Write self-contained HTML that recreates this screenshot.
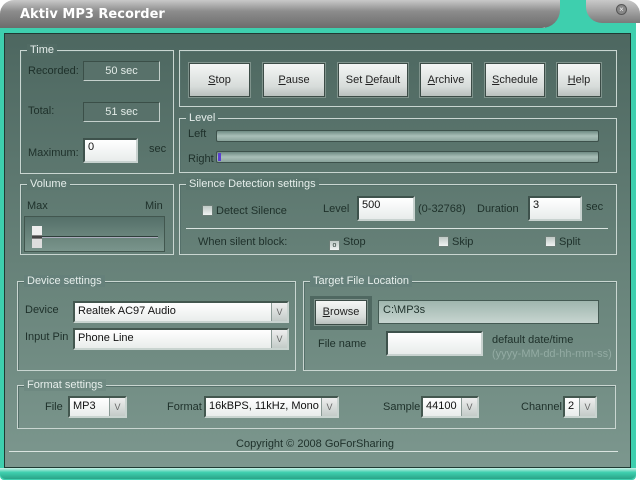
<!DOCTYPE html><html><head><style>
*{margin:0;padding:0;box-sizing:border-box}
body{width:640px;height:480px;overflow:hidden;background:#fff;font-family:"Liberation Sans",sans-serif;font-size:11px;color:#1e302a;position:relative}
.a{position:absolute}
.g{position:absolute;border:1px solid #c9d6d1;box-shadow:inset 1px 1px 0 #55706a}
.gl{position:absolute;top:-7px;left:6px;padding:0 3px;color:#e6eeeb;font-size:11px;line-height:12px}
.btn{position:absolute;height:34px;background:linear-gradient(#f4f6f5,#d7dcda 70%,#b9c0bd);border:1px solid #3c4c47;box-shadow:0 0 0 1px #7f938c;text-align:center;line-height:32px;color:#222;font-size:11px}
.btn u{text-decoration:underline}
.in{position:absolute;background:linear-gradient(#fff,#e8eceb);border:2px solid #3e524c;border-right-color:#c8d2cf;border-bottom-color:#c8d2cf;font-size:11px;padding:1px 3px;color:#111}
.ro{position:absolute;background:#58716a;border:1px solid #c4d0cc;border-top-color:#3b4f48;border-left-color:#3b4f48;text-align:center;color:#e3ece8;line-height:18px}
.bar{position:absolute;height:12px;background:linear-gradient(#6f8b83,#a9bfb8 50%,#8aa39b);border:1px solid #3d514b;border-radius:2px}
.sel{position:absolute;height:22px;background:linear-gradient(#fff,#e9edeb);border:2px solid #43574f;border-right-color:#c9d4d0;border-bottom-color:#c9d4d0;padding:2px 3px;font-size:11px;color:#111;white-space:nowrap;overflow:hidden}
.sel i{position:absolute;right:0;top:0;width:16px;height:18px;background:linear-gradient(#eee,#c3cbc8);border-left:1px solid #8a9a95;font-style:normal;font-size:9px;text-align:center;line-height:18px;color:#666}
.cb{display:inline-block;width:11px;height:11px;background:linear-gradient(#bfc9c5,#f0f3f2);border:1px solid #6c7f78;vertical-align:-2px;margin-right:3px}
</style></head><body>
<!-- title bar -->
<div class="a" style="left:545px;top:0;width:91px;height:40px;background:#3ecfae;border-radius:0 14px 0 0"></div>
<div class="a" style="left:0;top:0;width:560px;height:28px;background:linear-gradient(#c9c9c9,#8d8d8d 40%,#6c6c6c);border-radius:14px 0 18px 0"></div>
<div class="a" style="left:586px;top:0;width:54px;height:23px;background:linear-gradient(#c9c9c9,#7a7a7a);border-radius:0 14px 0 16px"></div>
<div class="a" style="left:20px;top:7px;color:#fff;font-weight:bold;font-size:13px;font-family:'DejaVu Sans',sans-serif;">Aktiv MP3 Recorder</div>
<div class="a" style="left:616px;top:4px;width:11px;height:11px;border-radius:50%;background:#888;border:1px solid #555;color:#eee;font-size:8px;line-height:9px;text-align:center">×</div>
<!-- body -->
<div class="a" style="left:0;top:28px;width:636px;height:452px;background:#3ecfae;border-radius:0 0 4px 4px"></div>
<div class="a" style="left:4px;top:33px;width:627px;height:435px;background:linear-gradient(#4d6760,#6a857c 60%,#7c978e);border:1px solid #1f3a33"></div>
<div class="a" style="left:0;top:468px;width:636px;height:11px;background:linear-gradient(#c8f2e7,#3ecfae 40%,#2aa488);border-radius:0 0 6px 6px"></div>

<!-- Time -->
<div class="g" style="left:20px;top:50px;width:154px;height:124px"><span class="gl" style="background:#516b64">Time</span></div>
<div class="a" style="left:28px;top:65px">Recorded:</div>
<div class="ro" style="left:83px;top:61px;width:77px;height:20px">50 sec</div>
<div class="a" style="left:28px;top:105px">Total:</div>
<div class="ro" style="left:83px;top:102px;width:77px;height:20px">51 sec</div>
<div class="a" style="left:28px;top:147px">Maximum:</div>
<div class="in" style="left:83px;top:138px;width:55px;height:25px">0</div>
<div class="a" style="left:149px;top:143px">sec</div>

<!-- Buttons -->
<div class="g" style="left:179px;top:50px;width:438px;height:57px"></div>
<div class="btn" style="left:189px;top:63px;width:61px"><u>S</u>top</div>
<div class="btn" style="left:263px;top:63px;width:62px"><u>P</u>ause</div>
<div class="btn" style="left:338px;top:63px;width:70px">Set <u>D</u>efault</div>
<div class="btn" style="left:420px;top:63px;width:52px"><u>A</u>rchive</div>
<div class="btn" style="left:485px;top:63px;width:60px"><u>S</u>chedule</div>
<div class="btn" style="left:557px;top:63px;width:44px"><u>H</u>elp</div>

<!-- Level -->
<div class="g" style="left:179px;top:118px;width:438px;height:55px"><span class="gl" style="background:#56716a">Level</span></div>
<div class="a" style="left:188px;top:128px">Left</div>
<div class="bar" style="left:216px;top:130px;width:383px"></div>
<div class="a" style="left:188px;top:153px">Right</div>
<div class="bar" style="left:216px;top:151px;width:383px"><div class="a" style="left:1px;top:1px;width:3px;height:8px;background:#5a3fd0"></div></div>

<!-- Volume -->
<div class="g" style="left:20px;top:184px;width:154px;height:71px"><span class="gl" style="background:#5b766e">Volume</span></div>
<div class="a" style="left:27px;top:200px">Max</div>
<div class="a" style="left:145px;top:200px">Min</div>
<div class="a" style="left:24px;top:216px;width:141px;height:36px;background:linear-gradient(#557069,#7a958c);border:1px solid #42574f"></div>
<div class="a" style="left:40px;top:236px;width:118px;height:2px;background:#2e3f3a;border-bottom:1px solid #aab"></div>
<div class="a" style="left:32px;top:226px;width:10px;height:22px;background:linear-gradient(#eee 40%,#444 45%,#444 55%,#ddd 60%)"></div>

<!-- Silence -->
<div class="g" style="left:179px;top:184px;width:438px;height:71px"><span class="gl" style="background:#5b766e">Silence Detection settings</span></div>
<div class="a" style="left:202px;top:205px"><span class="cb"></span>Detect Silence</div>
<div class="a" style="left:323px;top:203px">Level</div>
<div class="in" style="left:357px;top:196px;width:58px;height:25px">500</div>
<div class="a" style="left:418px;top:203px">(0-32768)</div>
<div class="a" style="left:477px;top:203px">Duration</div>
<div class="in" style="left:528px;top:196px;width:54px;height:25px">3</div>
<div class="a" style="left:586px;top:201px">sec</div>
<div class="a" style="left:186px;top:228px;width:422px;height:1px;background:#dbe5e1"></div>
<div class="a" style="left:198px;top:236px">When silent block:</div>
<div class="a" style="left:329px;top:236px"><span class="cb" style="text-align:center;font-size:7px;line-height:9px">o</span>Stop</div>
<div class="a" style="left:438px;top:236px"><span class="cb"></span>Skip</div>
<div class="a" style="left:545px;top:236px"><span class="cb"></span>Split</div>

<!-- Device -->
<div class="g" style="left:17px;top:281px;width:279px;height:90px"><span class="gl" style="background:#65807a">Device settings</span></div>
<div class="a" style="left:25px;top:304px">Device</div>
<div class="sel" style="left:73px;top:301px;width:216px">Realtek AC97 Audio<i>V</i></div>
<div class="a" style="left:25px;top:331px">Input Pin</div>
<div class="sel" style="left:73px;top:328px;width:216px">Phone Line<i>V</i></div>

<!-- Target -->
<div class="g" style="left:303px;top:281px;width:314px;height:90px"><span class="gl" style="background:#65807a">Target File Location</span></div>
<div class="a" style="left:310px;top:296px;width:62px;height:34px;background:#4f6861"></div>
<div class="btn" style="left:315px;top:300px;width:52px;height:25px;line-height:23px"><u>B</u>rowse</div>
<div class="a" style="left:378px;top:300px;width:221px;height:24px;background:linear-gradient(#9fb6ae,#c7d5d0);border:1px solid #445a53;padding:3px 4px">C:\MP3s</div>
<div class="a" style="left:318px;top:338px">File name</div>
<div class="in" style="left:386px;top:331px;width:97px;height:25px"></div>
<div class="a" style="left:492px;top:334px">default date/time</div>
<div class="a" style="left:492px;top:348px;color:#93aba3">(yyyy-MM-dd-hh-mm-ss)</div>

<!-- Format -->
<div class="g" style="left:17px;top:385px;width:599px;height:44px"><span class="gl" style="background:#6e8981">Format settings</span></div>
<div class="a" style="left:45px;top:401px">File</div>
<div class="sel" style="left:68px;top:396px;width:59px">MP3<i>V</i></div>
<div class="a" style="left:167px;top:401px">Format</div>
<div class="sel" style="left:204px;top:396px;width:135px">16kBPS, 11kHz, Mono<i>V</i></div>
<div class="a" style="left:383px;top:401px">Sample</div>
<div class="sel" style="left:421px;top:396px;width:58px">44100<i>V</i></div>
<div class="a" style="left:521px;top:401px">Channel</div>
<div class="sel" style="left:563px;top:396px;width:34px">2<i>V</i></div>

<div class="a" style="left:9px;top:451px;width:609px;height:1px;background:#dbe5e1"></div>
<div class="a" style="left:0;top:438px;width:630px;text-align:center">Copyright © 2008 GoForSharing</div>
</body></html>
